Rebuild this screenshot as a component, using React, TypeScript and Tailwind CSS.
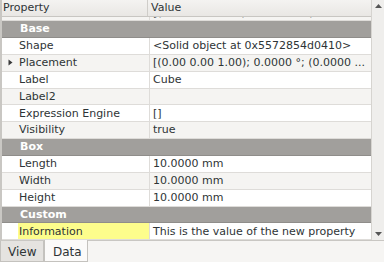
import React from 'react';

type Row =
  | { kind: 'group'; name: string }
  | { kind: 'prop'; name: string; value: string; expand?: boolean; highlight?: boolean };

const rows: Row[] = [
  { kind: 'group', name: 'Base' },
  { kind: 'prop', name: 'Shape', value: '<Solid object at 0x5572854d0410>' },
  { kind: 'prop', name: 'Placement', value: '[(0.00 0.00 1.00); 0.0000 °; (0.0000 ...', expand: true },
  { kind: 'prop', name: 'Label', value: 'Cube' },
  { kind: 'prop', name: 'Label2', value: '' },
  { kind: 'prop', name: 'Expression Engine', value: '[]' },
  { kind: 'prop', name: 'Visibility', value: 'true' },
  { kind: 'group', name: 'Box' },
  { kind: 'prop', name: 'Length', value: '10.0000 mm' },
  { kind: 'prop', name: 'Width', value: '10.0000 mm' },
  { kind: 'prop', name: 'Height', value: '10.0000 mm' },
  { kind: 'group', name: 'Custom' },
  { kind: 'prop', name: 'Information', value: 'This is the value of the new property', highlight: true },
];

function PropRow({ row, odd }: { row: Row; odd: boolean }) {
  if (row.kind === 'group') {
    return (
      <div className="h-[16.85px] flex items-center bg-[#a19f9c] border-b border-[#8f8d8a] pl-[18px] pt-[1px] text-white font-bold">
        {row.name}
      </div>
    );
  }
  const bg = odd ? 'bg-[#f5f4f2]' : 'bg-white';
  return (
    <div className={`h-[16.85px] flex border-b border-[#dedcd9] ${bg}`}>
      <div className="w-[16px] flex items-center justify-center shrink-0">
        {row.expand && (
          <svg width="5" height="7" viewBox="0 0 5 7">
            <path d="M0.5 0.5 L4.5 3.5 L0.5 6.5 Z" fill="#3a3a3a" />
          </svg>
        )}
      </div>
      <div
        className={`w-[132px] shrink-0 flex items-center pl-[1px] pt-[1px] border-r border-[#dedcd9] whitespace-nowrap overflow-hidden ${
          row.highlight ? 'bg-[#fdfd8c]' : ''
        }`}
      >
        {row.name}
      </div>
      <div className="flex-1 flex items-center pl-[3px] pt-[1px] whitespace-nowrap overflow-hidden">{row.value}</div>
    </div>
  );
}

export default function App() {
  let alt = 0;
  return (
    <div
      className="w-[384px] h-[262px] bg-[#f6f5f3] overflow-hidden text-[11px] text-[#2e3436] flex flex-col"
      style={{ fontFamily: '"DejaVu Sans", sans-serif' }}
    >
      <div className="h-[240px] flex border-l-2 border-[#c9c7c3] bg-white">
        <div className="flex-1 flex flex-col overflow-hidden">
          <div className="h-[17px] flex shrink-0 bg-gradient-to-b from-[#f4f3f1] to-[#e9e7e4] border-b border-[#c8c6c2]">
            <div className="w-[146px] shrink-0 pl-[1px] pt-[1px] flex items-center border-r border-[#cfcdc9]">Property</div>
            <div className="flex-1 pl-[3px] pt-[1px] flex items-center">Value</div>
          </div>
          <div className="flex-1 overflow-hidden">
            <div className="-mt-[12.6px]">
              <div className="h-[16.85px] flex border-b border-[#dedcd9] bg-[#f5f4f2]">
                <div className="w-[148px] shrink-0 border-r border-[#dedcd9]" />
                <div className="flex-1 flex items-end pl-[3px] leading-[14px] whitespace-nowrap overflow-hidden">
                  [(<span className="pl-[80px]">)</span>
                  <span className="pl-[62px]">(</span>
                </div>
              </div>
              {rows.map((r, i) => {
                if (r.kind === 'group') {
                  alt = 0;
                  return <PropRow key={i} row={r} odd={false} />;
                }
                const odd = alt % 2 === 1;
                alt++;
                return <PropRow key={i} row={r} odd={odd} />;
              })}
            </div>
          </div>
        </div>
        <div className="w-[13px] shrink-0 bg-[#efeeec] border-l border-[#d6d4d0] flex flex-col items-center justify-between py-[4px]">
          <svg width="7" height="4" viewBox="0 0 7 4">
            <path d="M0 4 L3.5 0 L7 4 Z" fill="#555" />
          </svg>
          <svg width="7" height="4" viewBox="0 0 7 4">
            <path d="M0 0 L3.5 4 L7 0 Z" fill="#555" />
          </svg>
        </div>
      </div>
      <div className="flex items-start h-[22px] border-t border-[#c9c7c3]">
        <div className="w-[44px] h-[21px] bg-[#e5e3e0] border border-t-0 border-[#c4c2be] flex items-center pl-[7px] pt-[1px] text-[12px]">
          View
        </div>
        <div className="w-[44px] h-[22px] -mt-px bg-[#fbfaf9] border border-t-0 border-[#c4c2be] flex items-center pl-[8px] pt-[2px] text-[12px]">
          Data
        </div>
      </div>
    </div>
  );
}
